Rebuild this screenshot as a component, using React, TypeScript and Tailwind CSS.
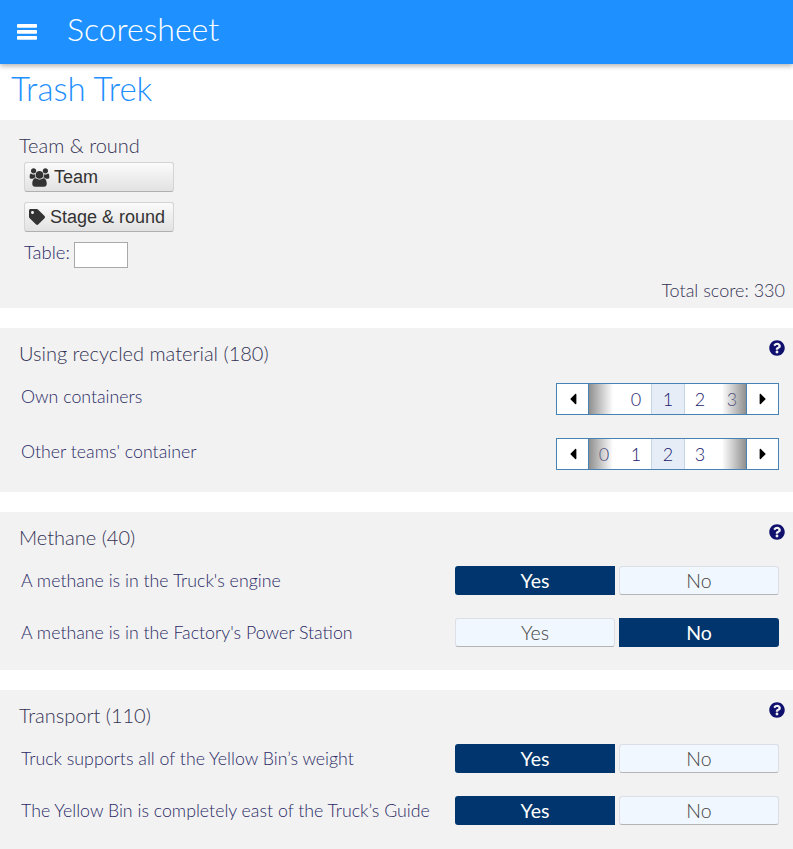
import type { ReactNode } from "react";
import { FaTag, FaQuestionCircle, FaCaretLeft, FaCaretRight } from "react-icons/fa";

const lato = "font-['Lato',sans-serif] font-light";

function Help() {
  return <FaQuestionCircle className="absolute right-[8px] top-[12px] text-[16px] text-[#10106e]" />;
}

function Bars() {
  return (
    <svg width="20" height="16" viewBox="0 0 20 16" className="ml-[17px] shrink-0 fill-white">
      <rect x="0" y="0" width="20" height="3.8" rx="0.7" />
      <rect x="0" y="6" width="20" height="3.8" rx="0.7" />
      <rect x="0" y="12" width="20" height="3.8" rx="0.7" />
    </svg>
  );
}

function Users() {
  return (
    <svg width="21" height="19" viewBox="0 0 2048 1792" className="shrink-0 fill-[#333]">
      <path d="M657 896q-162 5-265 128h-134q-82 0-138-40.500t-56-118.500q0-353 124-353 6 0 43.500 21t97.500 42.500 119 21.500q67 0 133-23-5 37-5 66 0 139 81 256zm1071 637q0 120-73 189.500t-194 69.500h-874q-121 0-194-69.500t-73-189.500q0-53 3.500-103.500t14-109 26.500-108.500 43-97.500 62-81 85.500-53.500 111.500-20q10 0 43 21.500t73 48 107 48 135 21.500 135-21.500 107-48 73-48 43-21.500q61 0 111.500 20t85.500 53.500 62 81 43 97.500 26.500 108.500 14 109 3.500 103.500zm-1024-1277q0 106-75 181t-181 75-181-75-75-181 75-181 181-75 181 75 75 181zm704 384q0 159-112.500 271.500t-271.500 112.500-271.500-112.500-112.500-271.500 112.500-271.500 271.500-112.500 271.500 112.500 112.500 271.500zm576 225q0 78-56 118.500t-138 40.500h-134q-103-123-265-128 81-117 81-256 0-29-5-66 66 23 133 23 59 0 119-21.500t97.500-42.500 43.500-21q124 0 124 353zm-128-609q0 106-75 181t-181 75-181-75-75-181 75-181 181-75 181 75 75 181z" />
    </svg>
  );
}

function Picker({ offset, selected }: { offset: number; selected: number }) {
  return (
    <div className="flex h-[32px] w-[223px] border border-[#4682b4] bg-white">
      <div className="flex w-[32px] shrink-0 items-center justify-center border-r border-[#4682b4] text-black">
        <FaCaretLeft className="text-[18px]" />
      </div>
      <div className="relative min-w-0 flex-1 overflow-hidden">
        <div className="flex h-full" style={{ marginLeft: offset }}>
          {[0, 1, 2, 3].map((n) => (
            <div
              key={n}
              className={
                n === selected
                  ? "flex h-full w-[32px] shrink-0 items-center justify-center bg-[#e6edf6] text-[18px] text-[#1a1a6e] outline outline-[#c5d5e8]"
                  : "flex h-full w-[32px] shrink-0 items-center justify-center text-[18px] text-[#1a1a6e]"
              }
            >
              {n}
            </div>
          ))}
        </div>
        <div className="absolute inset-y-0 left-0 w-[24px] bg-gradient-to-r from-[#8f8f8f] to-transparent" />
        <div className="absolute inset-y-0 right-0 w-[24px] bg-gradient-to-l from-[#8f8f8f] to-transparent" />
      </div>
      <div className="flex w-[32px] shrink-0 items-center justify-center border-l border-[#4682b4] text-black">
        <FaCaretRight className="text-[18px]" />
      </div>
    </div>
  );
}

function Choice({ label, on, side }: { label: string; on: boolean; side: "left" | "right" }) {
  if (on) {
    return (
      <div
        className={
          side === "left"
            ? "flex h-[29px] w-[160px] items-center justify-center rounded-l-[3px] bg-[#00366d] text-[19.5px] font-normal text-white"
            : "flex h-[29px] w-[160px] items-center justify-center rounded-r-[3px] bg-[#00366d] text-[19.5px] font-normal text-white"
        }
      >
        {label}
      </div>
    );
  }
  return (
    <div className="flex h-[29px] w-[160px] items-center justify-center rounded-[3px] border border-[#dcdfe6] border-b-[#b4b4b4] bg-[#f1f7fe] text-[19.5px] text-[#444]">
      {label}
    </div>
  );
}

function YesNo({ text, yes }: { text: string; yes: boolean }) {
  return (
    <div className="flex h-[29px] items-center justify-between pl-[2px]">
      <span className="text-[17.75px] text-[#2a2a66]">{text}</span>
      <div className="flex gap-[4px]">
        <Choice label="Yes" on={yes} side="left" />
        <Choice label="No" on={!yes} side="right" />
      </div>
    </div>
  );
}

function GrayButton({ icon, label, gap }: { icon: ReactNode; label: string; gap: string }) {
  return (
    <div
      className={
        gap === "wide"
          ? "flex h-[30px] w-[150px] items-center gap-[5px] rounded-[3px] border border-[#d4d4d4] border-b-[#b0b0b0] bg-gradient-to-b from-[#fbfbfb] to-[#e2e2e2] pl-[4px] font-['Liberation_Sans',sans-serif] text-[18px] font-normal text-[#333]"
          : "flex h-[30px] w-[150px] items-center gap-[4px] rounded-[3px] border border-[#d4d4d4] border-b-[#b0b0b0] bg-gradient-to-b from-[#fbfbfb] to-[#e2e2e2] pl-[4px] font-['Liberation_Sans',sans-serif] text-[18px] font-normal text-[#333]"
      }
    >
      {icon}
      <span>{label}</span>
    </div>
  );
}

export default function App() {
  return (
    <div className={`h-[849px] w-[793px] overflow-hidden bg-white ${lato}`}>
      <header className="flex h-[64px] items-center bg-[#1e90ff] shadow-[0_2px_5px_rgba(0,0,0,0.3)]">
        <Bars />
        <h1 className="ml-[30px] pb-[6px] text-[32px] text-white">Scoresheet</h1>
      </header>

      <div className="flex h-[56px] items-center pb-[6px] pl-[11px] text-[33px] text-[#1e90ff]">Trash Trek</div>

      <section className="h-[188px] bg-[#f2f2f2] px-[19px] pt-[13px] text-[#2a2a66]">
        <h2 className="text-[20px] leading-[24px] text-[#333355]">Team &amp; round</h2>
        <div className="mt-[5px] flex flex-col gap-[10px] pl-[5px]">
          <GrayButton icon={<Users />} label="Team" gap="normal" />
          <GrayButton icon={<FaTag className="text-[16px]" />} label="Stage & round" gap="wide" />
        </div>
        <div className="mt-[10px] flex items-center gap-[4px] pl-[5px] text-[18.5px]">
          <span className="-mt-[4px]">Table:</span>
          <div className="h-[26px] w-[54px] border border-[#a9a9a9] bg-white" />
        </div>
        <div className="mt-[9px] -mr-[11px] text-right text-[18px] text-[#333355]">Total score: 330</div>
      </section>

      <section className="relative mt-[20px] h-[164px] bg-[#f2f2f2] px-[14px] pt-[13px]">
        <Help />
        <h2 className="pl-[5px] text-[20px] leading-[24px] text-[#333355]">Using recycled material (180)</h2>
        <div className="mt-[18px] flex flex-col gap-[23px]">
          <div className="flex h-[32px] items-center justify-between pl-[7px]">
            <span className="-mt-[6px] text-[17.75px] text-[#2a2a66]">Own containers</span>
            <Picker offset={31} selected={1} />
          </div>
          <div className="flex h-[32px] items-center justify-between pl-[7px]">
            <span className="-mt-[6px] text-[17.75px] text-[#2a2a66]">Other teams' container</span>
            <Picker offset={-1} selected={2} />
          </div>
        </div>
      </section>

      <section className="relative mt-[20px] h-[158px] bg-[#f2f2f2] pl-[19px] pr-[14px] pt-[13px]">
        <Help />
        <h2 className="text-[20px] leading-[24px] text-[#333355]">Methane (40)</h2>
        <div className="mt-[17px] flex flex-col gap-[23px]">
          <YesNo text="A methane is in the Truck's engine" yes />
          <YesNo text="A methane is in the Factory's Power Station" yes={false} />
        </div>
      </section>

      <section className="relative mt-[20px] h-[159px] bg-[#f2f2f2] pl-[19px] pr-[14px] pt-[13px]">
        <Help />
        <h2 className="text-[20px] leading-[24px] text-[#333355]">Transport (110)</h2>
        <div className="mt-[17px] flex flex-col gap-[23px]">
          <YesNo text="Truck supports all of the Yellow Bin’s weight" yes />
          <YesNo text="The Yellow Bin is completely east of the Truck’s Guide" yes />
        </div>
      </section>
    </div>
  );
}
